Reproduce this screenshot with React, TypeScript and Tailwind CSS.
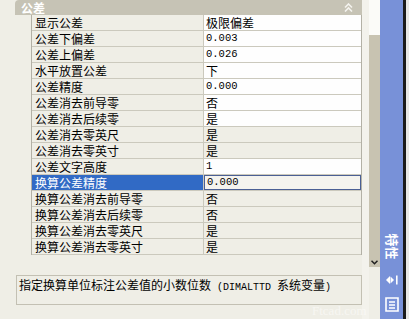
import React from 'react';

const cjk = { fontFamily: '"Noto Sans CJK SC", "Noto Sans", sans-serif' };
const mono = { fontFamily: '"Liberation Mono", "DejaVu Sans Mono", monospace' };

// label, value, editable (white) cell
const rows: [string, string, boolean][] = [
  ['显示公差', '极限偏差', true],
  ['公差下偏差', '0.003', true],
  ['公差上偏差', '0.026', true],
  ['水平放置公差', '下', true],
  ['公差精度', '0.000', true],
  ['公差消去前导零', '否', true],
  ['公差消去后续零', '是', true],
  ['公差消去零英尺', '是', false],
  ['公差消去零英寸', '是', false],
  ['公差文字高度', '1', true],
  ['换算公差精度', '0.000', true],
  ['换算公差消去前导零', '否', false],
  ['换算公差消去后续零', '否', false],
  ['换算公差消去零英尺', '是', false],
  ['换算公差消去零英寸', '是', false],
];

const SELECTED = 10;

const Value: React.FC<{ v: string }> = ({ v }) =>
  /^[\x00-\x7f]+$/.test(v) ? (
    <span className="text-[10.5px] text-black" style={mono}>{v}</span>
  ) : (
    <span className="text-[12px] text-black" style={cjk}>{v}</span>
  );

export default function App() {
  return (
    <div className="relative w-[409px] h-[319px] flex bg-[#efeee6] overflow-hidden select-none" style={cjk}>
      {/* property panel */}
      <div className="w-[362px] flex flex-col">
        <div className="ml-[15px] h-[15px] bg-[#c6c3b5] rounded-tl-[4px] flex items-center justify-between pl-[6px] pr-[9px]">
          <span className="text-[12px] font-bold text-white leading-none">公差</span>
          <svg width="9" height="9" viewBox="0 0 9 9" fill="none" stroke="#f4f3ee" strokeWidth="1.6">
            <path d="M1 4.5 L4.5 1 L8 4.5" />
            <path d="M1 8.5 L4.5 5 L8 8.5" />
          </svg>
        </div>

        <div className="ml-[31px] border-l border-r border-[#b3b1a6] flex flex-col">
          {rows.map(([label, value, editable], i) => {
            const sel = i === SELECTED;
            return (
              <div key={i} className="flex h-[16px] border-b border-[#cbc9bd]">
                <div
                  className={
                    'w-[172px] border-r border-[#cbc9bd] pl-[3px] flex items-center text-[12px] leading-none ' +
                    (sel ? 'bg-[#316ac5] text-white' : 'bg-[#efeee6] text-black')
                  }
                >
                  {label}
                </div>
                <div
                  className={
                    'flex-1 flex items-center pl-[2px] ' +
                    (sel
                      ? 'bg-[#f4f3ee] border border-[#4a5f94]'
                      : editable
                        ? 'bg-[#fefefe]'
                        : 'bg-[#efeee6]')
                  }
                >
                  <Value v={value} />
                </div>
              </div>
            );
          })}
        </div>

        <div className="ml-[16px] mt-[20px] h-[30px] border border-[#c3c0b3] bg-[#efeee6] pl-[2px] pt-[2px] flex items-start">
          <span className="text-[12px] text-black leading-[14px] whitespace-pre">
            指定换算单位标注公差值的小数位数
            <span className="text-[10px]" style={mono}> (DIMALTTD </span>
            系统变量
            <span className="text-[10px]" style={mono}>)</span>
          </span>
        </div>
      </div>

      {/* scrollbar */}
      <div className="w-[18px] flex">
        <div className="w-[7px] bg-[#f3f2ec]" />
        <div className="w-[11px] flex flex-col">
          <div className="h-[35px] bg-[#fbfbf8]" />
          <div className="h-[222px] bg-[#c8c3b1]" />
          <div className="h-[10px] bg-[#c8c3b1] flex items-center justify-center">
            <svg width="7" height="5" viewBox="0 0 7 5" fill="none" stroke="#202020" strokeWidth="1.5">
              <path d="M0.5 0.8 L3.5 3.8 L6.5 0.8" />
            </svg>
          </div>
          <div className="flex-1 bg-[#efeee6]" />
        </div>
      </div>

      {/* palette title strip */}
      <div className="w-[23px] bg-[#7891d8] flex flex-col items-center">
        <div className="h-[229px]" />
        <div className="h-[34px] flex items-center justify-center">
          <span className="rotate-90 text-[13px] font-bold text-white whitespace-nowrap leading-none">特性</span>
        </div>
        <div className="h-[12px]" />
        <svg width="12" height="10" viewBox="0 0 12 10" fill="#fff">
          <path d="M0 5 L4 1 L4 9 Z" />
          <path d="M8 5 L4.5 1.5 L4.5 8.5 Z" />
          <rect x="10" y="0.5" width="1.6" height="9" />
        </svg>
        <div className="h-[12px]" />
        <svg width="14" height="15" viewBox="0 0 14 15" fill="none" stroke="#fff" strokeWidth="1.6">
          <path d="M1 1 H13 V14 H1 Z" />
          <path d="M4 5 H10 M4 8 H10 M4 11 H10" />
        </svg>
      </div>
      <div className="w-[3px] bg-[#1b1b1b]" />
      <div className="flex-1 bg-[#e9e9e6]" />

      {/* faint watermark */}
      <span
        className="absolute left-[312px] top-[304px] text-[13px] leading-[14px] text-white/50"
        style={{ fontFamily: '"Liberation Serif", serif' }}
      >
        Ftcad.com
      </span>
    </div>
  );
}
